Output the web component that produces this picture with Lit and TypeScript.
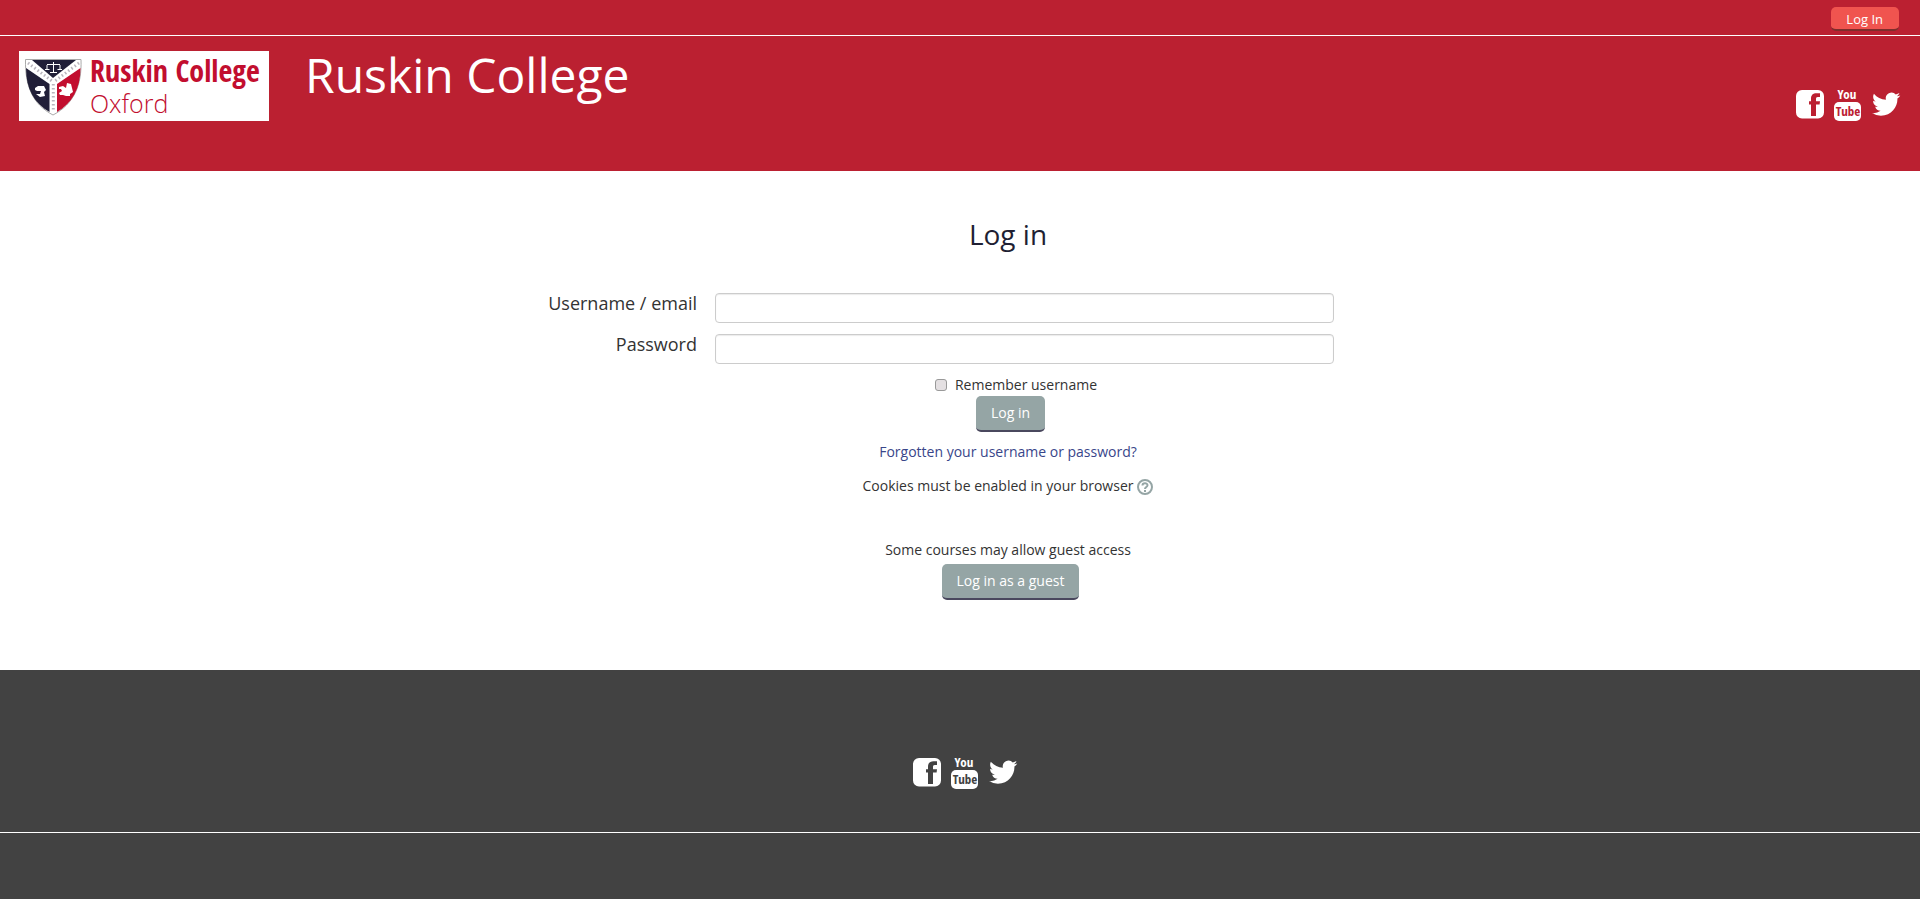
import { LitElement, html, css } from "lit";
import { customElement } from "lit/decorators.js";

@customElement("social-links")
export class SocialLinks extends LitElement {
  static styles = css`
    :host { display: flex; gap: 9px; align-items: center; color: #fff; }
    a { display: block; color: inherit; }
    svg { display: block; overflow: visible; }
    text { font: 700 13px "Open Sans Condensed", "Liberation Sans Narrow", sans-serif; text-anchor: middle; }
    .you { fill: currentColor; }
    .tube { fill: var(--ground); }
  `;
  render() {
    return html`
      <a href="#" aria-label="Facebook"><svg width="29" height="34" viewBox="0 0 29 34">
        <path fill="currentColor" fill-rule="evenodd" d="M6 3H22a6 6 0 0 1 6 6V25.500a6 6 0 0 1-6 6H6a6 6 0 0 1-6-6V9a6 6 0 0 1 6-6ZM15 29V17.600H13V14.200H15V12C15 8 17 6.300 20.500 6.300H24V10H21.800C20.400 10 20 10.800 20 12V14.200H24L23.600 17.600H20V29Z"/>
      </svg></a>
      <a href="#" aria-label="YouTube"><svg width="29" height="34" viewBox="0 0 29 34">
        <text class="you" x="13" y="12">You</text>
        <rect x="0" y="15" width="27" height="19" rx="5" fill="currentColor"/>
        <text class="tube" x="14" y="29">Tube</text>
      </svg></a>
      <a href="#" aria-label="Twitter"><svg width="29" height="34" viewBox="0 0 29 34">
        <path fill="currentColor" transform="translate(0 3) scale(1.18)" d="M23.950 4.570a10 10 0 0 1-2.820.77 4.960 4.960 0 0 0 2.160-2.720c-.95.550-2.010.960-3.130 1.180a4.920 4.920 0 0 0-8.380 4.480C7.690 8.090 4.070 6.130 1.640 3.160a4.820 4.820 0 0 0-.67 2.480c0 1.710.87 3.210 2.190 4.100a4.900 4.900 0 0 1-2.230-.62v.06a4.920 4.920 0 0 0 3.950 4.830 5 5 0 0 1-2.210.08 4.940 4.940 0 0 0 4.600 3.420A9.870 9.870 0 0 1 0 19.540a13.990 13.990 0 0 0 7.550 2.210c9.050 0 14-7.500 14-13.980 0-.21 0-.42-.02-.63a9.940 9.940 0 0 0 2.460-2.550z"/>
      </svg></a>
    `;
  }
}

@customElement("college-logo")
export class CollegeLogo extends LitElement {
  static styles = css`
    :host { display: block; width: 250px; height: 70px; background: #fff; }
    svg { display: block; }
    text { fill: #c20e2f; }
    .name { font: 700 30px "Open Sans Condensed", "Liberation Sans Narrow", sans-serif; }
    .town { font: 300 25px "Open Sans", sans-serif; }
  `;
  render() {
    return html`<svg width="250" height="70" viewBox="0 0 250 70">
      <path d="M6.500 8.500H62C63 34 55 53 34 64 13 53 6 34 6.500 8.500Z" fill="#fff" stroke="#aaa"/>
      <path d="M13 9H57L34 27Z" fill="#211f38"/>
      <path d="M7 17L30.500 33V61C15 52 7 38 7 17Z" fill="#211f38"/>
      <path d="M61.500 17L38 33V61C53 52 61.500 38 61.500 17Z" fill="#c20e2f"/>
      <path d="M9 12L33 30M60 12L36 30M34.300 33V61" fill="none" stroke="#b9b5bd" stroke-width="3" stroke-dasharray="1.500 2.500"/>
      <path d="M28 13.500h13M34.500 11v10M31 21.500h7M26 18.500h4.500M38.500 18.500h4.500M28 14v4M41 14v4" fill="none" stroke="#fff"/>
      <path d="M16 37l3-2 6 0 2 4-2 2 1 4-5 1-4-3 4 0 1-3-4 0-2-1z" fill="#fff"/>
      <path d="M40 36l4-1 3 2 1-5 4 1 1 4 1 4-3 2 0 2-4 0-3-1-3 0-1-2 3-2-1-2-2 0z" fill="#fff"/>
      <text class="name" x="71" y="31">Ruskin College</text>
      <text class="town" x="71" y="62">Oxford</text>
    </svg>`;
  }
}

@customElement("app-root")
export class AppRoot extends LitElement {
  static styles = css`
    :host { display: block; font: 14px/20px "Open Sans", sans-serif; color: #333; background: #fff; }
    * { box-sizing: border-box; }
    .topbar { display: flex; justify-content: flex-end; padding: 7px 21px 4px; background: #bb2031; border-bottom: 1px solid #fff; }
    .topbar a { height: 24px; padding: 2px 16px 0 15px; border-radius: 5px; border-bottom: 2px solid #7d2e2c; background: #f0544f; color: #fff; font-size: 13px; text-decoration: none; }
    header { display: flex; align-items: flex-start; padding: 15px 19px 50px; background: #bb2031; --ground: #bb2031; }
    h1 { flex: 1; margin: 0 0 0 36px; font-size: 48px; line-height: 48px; font-weight: 400; color: #fff; }
    header social-links { margin-top: 36px; }
    main { padding: 43px 0 70px 5%; text-align: center; }
    h2 { margin: 0 0 39px; font-size: 28px; line-height: 40px; font-weight: 400; color: #1f1f33; }
    .field { display: grid; grid-template-columns: 601fr 619fr 568fr; column-gap: 18px; margin-bottom: 11px; }
    .field label { text-align: right; font-size: 18px; }
    .field input { width: 100%; height: 30px; padding: 4px 6px; border: 1px solid #ccc; border-radius: 4px; font: inherit; box-shadow: inset 0 1px 1px rgba(0, 0, 0, 0.08); }
    .remember { display: flex; justify-content: center; align-items: center; gap: 8px; padding-left: 16px; margin-bottom: 1px; }
    .remember input { appearance: none; width: 12px; height: 12px; margin: 0; border: 1px solid #999; border-radius: 3px; background: #e4e0e2; }
    button { height: 36px; margin-left: 5px; padding: 0 15px; border: 0; border-bottom: 2px solid #4a485e; border-radius: 5px; background: #95a5a5; color: #fff; font: inherit; vertical-align: top; }
    p { margin: 0; }
    .forgot { margin: 10px 0 14px; }
    .forgot a { color: #39468a; text-decoration: none; }
    .cookies { display: flex; justify-content: center; gap: 4px; }
    .cookies a { display: flex; padding-top: 3px; }
    .guest { margin: 44px 0 4px; }
    footer { background: #424242; color: #fff; --ground: #424242; }
    .links { display: flex; justify-content: center; padding: 85px 0 43px 10px; border-bottom: 1px solid #fff; }
    .base { height: 66px; }
  `;
  render() {
    return html`
      <div class="topbar"><a href="#">Log In</a></div>
      <header><college-logo></college-logo><h1>Ruskin College</h1><social-links></social-links></header>
      <main>
        <h2>Log in</h2>
        <form @submit=${(e: Event) => e.preventDefault()}>
          <div class="field"><label for="username">Username / email</label><input id="username" type="text"></div>
          <div class="field"><label for="password">Password</label><input id="password" type="password"></div>
          <div class="remember"><input id="remember" type="checkbox"><label for="remember">Remember username</label></div>
          <button type="submit">Log in</button>
        </form>
        <p class="forgot"><a href="#">Forgotten your username or password?</a></p>
        <p class="cookies">Cookies must be enabled in your browser
          <a href="#" aria-label="Help with cookies"><svg width="16" height="16" viewBox="0 0 16 16" fill="none" stroke="#95a5a5" stroke-width="2">
            <circle cx="8" cy="8" r="7"/><path d="M5.500 6.500C5.500 3.500 10.500 3.500 10.500 6.300 10.500 8 8 8 8 10M8 11v2"/>
          </svg></a>
        </p>
        <p class="guest">Some courses may allow guest access</p>
        <button type="button">Log in as a guest</button>
      </main>
      <footer><div class="links"><social-links></social-links></div><div class="base"></div></footer>
    `;
  }
}
